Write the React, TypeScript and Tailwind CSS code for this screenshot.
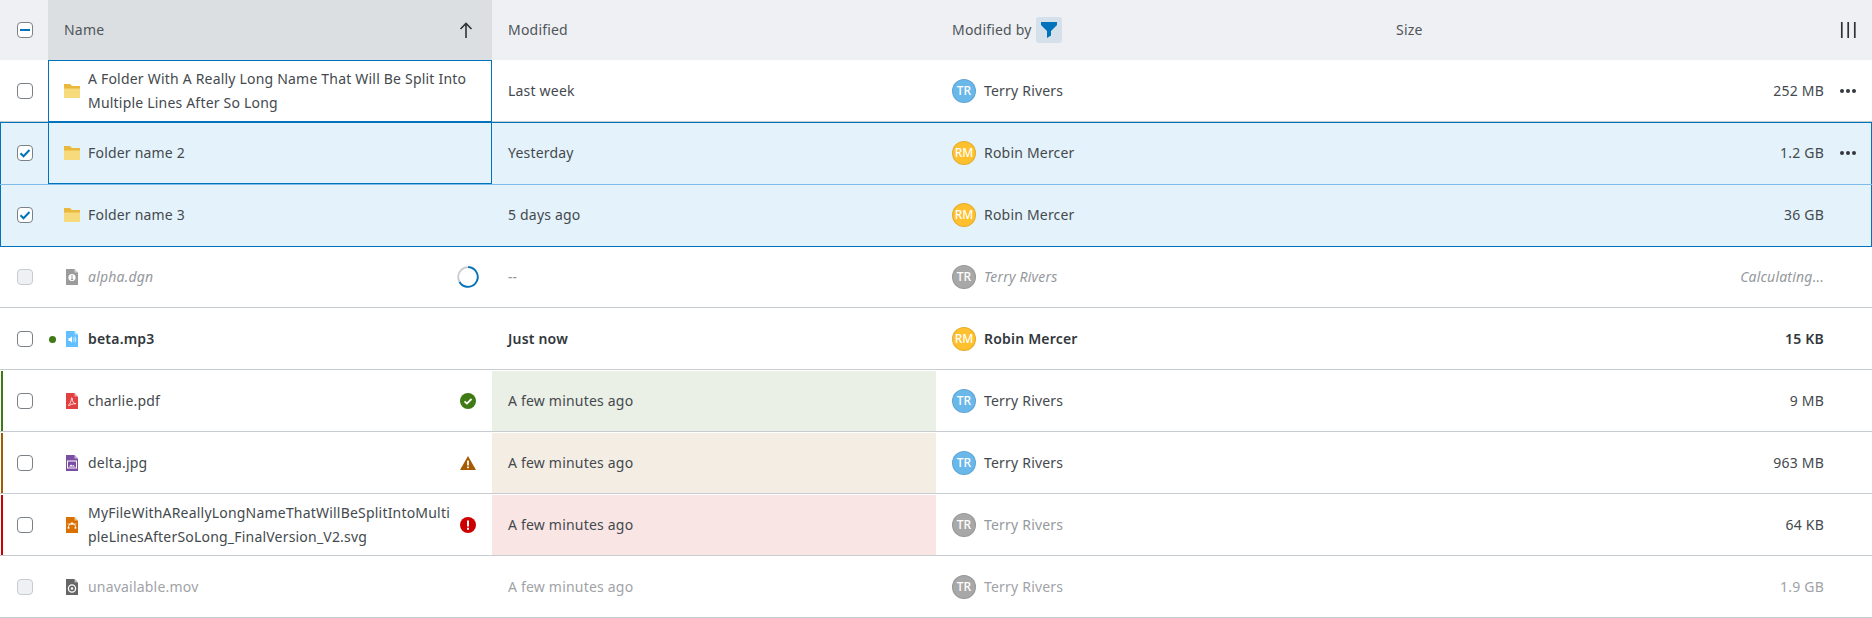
import { ReactNode } from 'react';

type Tone = 'normal' | 'busy' | 'unread' | 'off';
type Status = 'ok' | 'warn' | 'err';

const FILE_PATH = 'M2 0h8.5L14 3.5V16H2z';

function FolderIcon() {
  return (
    <svg width="16" height="16" viewBox="0 0 16 16" className="block shrink-0">
      <path d="M0 1h6l2 2h8v3H0z" fill="#e9b83c" />
      <path d="M0 5.5h16V15H0z" fill="#f7da7c" />
    </svg>
  );
}

function FileIcon({ color, children }: { color: string; children: ReactNode }) {
  return (
    <svg width="16" height="16" viewBox="0 0 16 16" className="block shrink-0">
      <path d={FILE_PATH} fill={color} />
      <path d="M10.5 0L14 3.5h-3.5z" fill="#fff" opacity="0.55" />
      {children}
    </svg>
  );
}

const dgnIcon = (
  <FileIcon color="#9b9b9b">
    <circle cx="8" cy="8.5" r="3.6" fill="#fff" />
    <path d="M8 6v4M6.8 10.5h2.4" stroke="#9b9b9b" strokeWidth="1" />
  </FileIcon>
);
const mp3Icon = (
  <FileIcon color="#61bfff">
    <path d="M4.5 7h1.7L8 5.2v6.6L6.2 10H4.5z" fill="#fff" />
    <path d="M9.3 6.6c.8 1 .8 2.8 0 3.8M10.8 5.6c1.3 1.6 1.3 4.2 0 5.8" stroke="#fff" strokeWidth="0.8" fill="none" />
  </FileIcon>
);
const pdfIcon = (
  <FileIcon color="#e04040">
    <path d="M4 12.5c1.8-1 3.4-4.2 3.4-7 0-1.2 1 -1 .9.4-.2 2.6 1.6 4.8 3.7 4.8-2.6-.2-6.4 1-7.2 2.2" stroke="#fff" strokeWidth="0.8" fill="none" />
  </FileIcon>
);
const jpgIcon = (
  <FileIcon color="#7a4ea3">
    <rect x="3.5" y="6" width="9" height="7" fill="none" stroke="#fff" strokeWidth="1" />
    <path d="M5 11.5l2-2 1.5 1.2 1-.8 1.5 1.6z" fill="#fff" />
  </FileIcon>
);
const svgIcon = (
  <FileIcon color="#d97000">
    <path d="M4.5 11V9.5C5 7.5 6.5 6.5 8 6.5s3 1 3.5 3V11" stroke="#fff" strokeWidth="1" fill="none" />
    <path d="M3.5 7h9" stroke="#fff" strokeWidth="0.7" />
    <rect x="7" y="5.5" width="2" height="2" fill="#fff" />
    <rect x="3.7" y="10" width="1.7" height="1.7" fill="#fff" />
    <rect x="10.6" y="10" width="1.7" height="1.7" fill="#fff" />
  </FileIcon>
);
const movIcon = (
  <FileIcon color="#666666">
    <circle cx="8" cy="9.5" r="3.6" fill="none" stroke="#fff" strokeWidth="1.3" />
    <circle cx="8" cy="9.5" r="1.3" fill="#fff" />
  </FileIcon>
);

function StatusIcon({ kind }: { kind: Status }) {
  if (kind === 'ok') {
    return (
      <svg width="16" height="16" viewBox="0 0 16 16" className="shrink-0">
        <circle cx="8" cy="8" r="8" fill="#3f7a14" />
        <path d="M4.5 8.3l2.4 2.3 4.6-4.6" stroke="#fff" strokeWidth="1.8" fill="none" />
      </svg>
    );
  }
  if (kind === 'warn') {
    return (
      <svg width="16" height="16" viewBox="0 0 16 16" className="shrink-0">
        <path d="M8 1l8 14H0z" fill="#a35a00" />
        <path d="M7.1 5.5h1.8v5H7.1zM7.1 11.5h1.8v1.8H7.1z" fill="#fff" />
      </svg>
    );
  }
  return (
    <svg width="16" height="16" viewBox="0 0 16 16" className="shrink-0">
      <circle cx="8" cy="8" r="8" fill="#cc0000" />
      <path d="M7 3.5h2v6H7zM7 10.7h2v2H7z" fill="#fff" />
    </svg>
  );
}

function Spinner() {
  return (
    <svg width="22" height="22" viewBox="0 0 22 22" className="shrink-0 -mr-[3px] -ml-[3px]">
      <circle cx="11" cy="11" r="9.8" fill="none" stroke="#c7ccd1" strokeWidth="1.8" />
      <path d="M11 1.2A9.8 9.8 0 1 1 2.5 16" fill="none" stroke="#0073ba" strokeWidth="1.8" />
    </svg>
  );
}

function Checkbox({ state, disabled }: { state?: 'checked' | 'mixed'; disabled?: boolean }) {
  return (
    <span
      className={`flex h-4 w-4 items-center justify-center rounded-[4px] border ${
        disabled ? 'border-[#c7ccd1] bg-[#eef0f3]' : 'border-[#7b8085] bg-white'
      }`}
    >
      {state === 'checked' && (
        <svg width="12" height="12" viewBox="0 0 12 12">
          <path d="M1.5 6.2l3 3 6-6.2" stroke="#0073ba" strokeWidth="2" fill="none" />
        </svg>
      )}
      {state === 'mixed' && <span className="h-[2px] w-[10px] bg-[#0073ba]" />}
    </span>
  );
}

function Avatar({ initials, color }: { initials: string; color: 'blue' | 'gold' | 'grey' }) {
  const cls = {
    blue: 'bg-[#6ab7ea]',
    gold: 'bg-[#ffc02e]',
    grey: 'bg-[#a8a8a8]',
  }[color];
  return (
    <span
      className={`flex h-6 w-6 shrink-0 items-center justify-center rounded-full border border-black/10 text-xs font-medium not-italic tracking-normal text-white ${cls}`}
    >
      {initials}
    </span>
  );
}

type Row = {
  name: string;
  icon: ReactNode;
  modified: string;
  by: string;
  avatar: 'blue' | 'gold' | 'grey';
  size: string;
  tone?: Tone;
  status?: Status;
  checked?: boolean;
  focused?: boolean;
  actions?: boolean;
  byGrey?: boolean;
  breakAll?: boolean;
};

const folder = <FolderIcon />;

const rows: Row[] = [
  {
    name: 'A Folder With A Really Long Name That Will Be Split Into Multiple Lines After So Long',
    icon: folder,
    modified: 'Last week',
    by: 'Terry Rivers',
    avatar: 'blue',
    size: '252 MB',
    focused: true,
    actions: true,
  },
  {
    name: 'Folder name 2',
    icon: folder,
    modified: 'Yesterday',
    by: 'Robin Mercer',
    avatar: 'gold',
    size: '1.2 GB',
    checked: true,
    focused: true,
    actions: true,
  },
  { name: 'Folder name 3', icon: folder, modified: '5 days ago', by: 'Robin Mercer', avatar: 'gold', size: '36 GB', checked: true },
  { name: 'alpha.dgn', icon: dgnIcon, modified: '--', by: 'Terry Rivers', avatar: 'grey', size: 'Calculating...', tone: 'busy' },
  { name: 'beta.mp3', icon: mp3Icon, modified: 'Just now', by: 'Robin Mercer', avatar: 'gold', size: '15 KB', tone: 'unread' },
  { name: 'charlie.pdf', icon: pdfIcon, modified: 'A few minutes ago', by: 'Terry Rivers', avatar: 'blue', size: '9 MB', status: 'ok' },
  { name: 'delta.jpg', icon: jpgIcon, modified: 'A few minutes ago', by: 'Terry Rivers', avatar: 'blue', size: '963 MB', status: 'warn' },
  {
    name: 'MyFileWithAReallyLongNameThatWillBeSplitIntoMultipleLinesAfterSoLong_FinalVersion_V2.svg',
    icon: svgIcon,
    modified: 'A few minutes ago',
    by: 'Terry Rivers',
    avatar: 'grey',
    size: '64 KB',
    status: 'err',
    byGrey: true,
    breakAll: true,
  },
  { name: 'unavailable.mov', icon: movIcon, modified: 'A few minutes ago', by: 'Terry Rivers', avatar: 'grey', size: '1.9 GB', tone: 'off' },
];

const STATUS_BAR: Record<Status, string> = {
  ok: 'bg-[#3f7a14]',
  warn: 'bg-[#a35a00]',
  err: 'bg-[#cc0000]',
};
const STATUS_CELL: Record<Status, string> = {
  ok: 'bg-[#ebf0e6]',
  warn: 'bg-[#f4ede4]',
  err: 'bg-[#f9e5e4]',
};

// selection lines sit one pixel below the grey row lines, so they are painted on the row top
function rowShell(index: number) {
  if (index === 1) return 'bg-[#e4f3fb] shadow-[inset_0_1px_0_#0073ba,inset_1px_0_0_#0073ba,inset_-1px_0_0_#0073ba]';
  if (index === 2) return 'bg-[#e4f3fb] shadow-[inset_0_1px_0_#7fbce8,inset_1px_0_0_#0073ba,inset_-1px_0_0_#0073ba]';
  if (index === 3) return 'bg-white shadow-[inset_0_1px_0_#0073ba,inset_0_-1px_0_#c7ccd1]';
  return 'bg-white shadow-[inset_0_-1px_0_#c7ccd1]';
}

function TableRow({ row, index }: { row: Row; index: number }) {
  const tone = row.tone ?? 'normal';
  const textCls =
    tone === 'busy'
      ? 'italic text-[#95999d]'
      : tone === 'off'
        ? 'text-[#9fa3a7]'
        : tone === 'unread'
          ? 'font-semibold text-[#32373c]'
          : 'text-[#44494e]';

  return (
    <div className={`flex h-[62px] ${rowShell(index)} ${textCls}`}>
      <div className="relative flex w-12 shrink-0 items-center py-px pl-[17px]">
        {row.status && <span className={`absolute bottom-px left-px top-px w-[2px] ${STATUS_BAR[row.status]}`} />}
        <Checkbox state={row.checked ? 'checked' : undefined} disabled={tone === 'busy' || tone === 'off'} />
      </div>

      <div
        className={`flex w-[444px] shrink-0 items-center gap-2 px-4 py-px ${
          row.focused ? 'outline outline-1 -outline-offset-1 outline-[#0073ba]' : ''
        }`}
      >
        <span className="relative shrink-0">
          {tone === 'unread' && <span className="absolute -left-[15px] top-[5px] h-[7px] w-[7px] rounded-full bg-[#3f7a14]" />}
          {row.icon}
        </span>
        <span className={`min-w-0 flex-1 ${row.breakAll ? 'break-all' : ''}`}>{row.name}</span>
        {row.status && <StatusIcon kind={row.status} />}
        {tone === 'busy' && <Spinner />}
      </div>

      <div className={`flex w-[444px] shrink-0 items-center px-4 ${row.status ? `my-px ${STATUS_CELL[row.status]} text-[#44494e]` : 'py-px'}`}>
        {row.modified}
      </div>

      <div className={`flex w-[444px] shrink-0 items-center gap-2 px-4 py-px ${row.byGrey ? 'text-[#95999d]' : ''}`}>
        <Avatar initials={row.by === 'Robin Mercer' ? 'RM' : 'TR'} color={row.avatar} />
        <span>{row.by}</span>
      </div>

      <div className="flex w-[444px] shrink-0 items-center justify-end py-px pl-4">{row.size}</div>

      <div className="flex flex-1 items-center justify-center py-px">
        {row.actions && (
          <svg width="16" height="16" viewBox="0 0 16 16">
            <circle cx="2" cy="8" r="2" fill="#33383d" />
            <circle cx="8" cy="8" r="2" fill="#33383d" />
            <circle cx="14" cy="8" r="2" fill="#33383d" />
          </svg>
        )}
      </div>
    </div>
  );
}

export default function App() {
  return (
    <div className="h-[618px] w-[1872px] overflow-hidden bg-white text-sm leading-6 tracking-[0.2px] font-['Noto_Sans',sans-serif]">
      {/* Header */}
      <div className="flex h-[60px] bg-[#eef0f3] text-[#50555a]">
        <div className="flex w-12 shrink-0 items-center pl-[17px]">
          <Checkbox state="mixed" />
        </div>
        <div className="flex w-[444px] shrink-0 items-center justify-between bg-[#dcdfe2] pl-4 pr-[18px]">
          <span>Name</span>
          <svg width="16" height="16" viewBox="0 0 16 16">
            <path d="M8 16V1.5M2.5 7l5.5-5.5L13.5 7" stroke="#2f3439" strokeWidth="1.6" fill="none" />
          </svg>
        </div>
        <div className="flex w-[444px] shrink-0 items-center px-4">Modified</div>
        <div className="flex w-[444px] shrink-0 items-center px-4">
          <span>Modified by</span>
          <span className="ml-[4px] flex h-[26px] w-[26px] items-center justify-center rounded-[3px] bg-[#d4e0ea]">
            <svg width="16" height="16" viewBox="0 0 16 16">
              <path d="M0 0h16v3L10 9v4.5L6 16V9L0 3z" fill="#0073ba" />
            </svg>
          </span>
        </div>
        <div className="flex w-[444px] shrink-0 items-center px-4">Size</div>
        <div className="flex flex-1 items-center justify-center">
          <svg width="16" height="16" viewBox="0 0 16 16">
            <path d="M1.8 0v16M8.2 0v16M14.8 0v16" stroke="#2f3439" strokeWidth="1.7" />
          </svg>
        </div>
      </div>

      {rows.map((row, i) => (
        <TableRow key={row.name} row={row} index={i} />
      ))}
    </div>
  );
}
